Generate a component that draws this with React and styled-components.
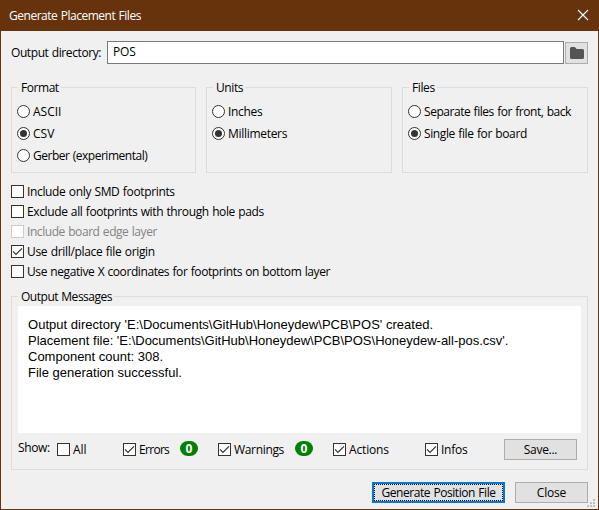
import React from "react";
import styled, { createGlobalStyle } from "styled-components";

const GlobalStyle = createGlobalStyle`
  *, *::before, *::after { box-sizing: border-box; }
  body {
    margin: 0;
    background: #f0f0f0;
    color: #000;
    font: 12px/16px "Open Sans", "Noto Sans", sans-serif;
    word-spacing: 0.6px;
  }
`;

const Window = styled.div`
  width: 599px;
  height: 510px;
  display: flex;
  flex-direction: column;
  background: #f0f0f0;
  border: 1px solid #66330d;
  border-top: 0;
  position: relative;
  white-space: nowrap;
`;

const TitleBar = styled.header`
  height: 31px;
  flex: none;
  display: flex;
  align-items: center;
  justify-content: space-between;
  padding: 0 9px 0 8px;
  background: #66330d;
  color: #fff;
`;

const Text = styled.span`
  letter-spacing: ${(p) => p.$track || 0}px;
`;

const CloseIcon = styled.svg`
  width: 12px;
  height: 12px;
  display: block;
  margin-top: -1px;
`;

const Content = styled.main`
  display: flex;
  flex-direction: column;
  padding: 10px 10px 0;
`;

const DirectoryRow = styled.div`
  display: flex;
  height: 23px;
`;

const DirectoryLabel = styled.label`
  width: 96px;
  padding-top: 4px;
`;

const DirectoryField = styled.div`
  width: 457px;
  height: 23px;
  border: 1px solid #7a7a7a;
  background: #fff;
  padding: 2px 5px;
`;

const BrowseButton = styled.button`
  width: 23px;
  height: 22px;
  margin: 1px 0 0 1px;
  padding: 0;
  display: flex;
  align-items: center;
  justify-content: center;
  border: 1px solid #adadad;
  background: #e1e1e1;
`;

const Groups = styled.div`
  display: flex;
  justify-content: space-between;
  margin-top: 15px;
`;

const Group = styled.section`
  width: ${(p) => p.$width}px;
  height: ${(p) => p.$height}px;
  margin-top: 8px;
  border: 1px solid #dcdcdc;
  display: flex;
  flex-direction: column;
  align-items: flex-start;
`;

const MessageGroup = styled(Group)`
  margin-top: 14px;
`;

const GroupTitle = styled.h2`
  margin: -9px 0 0 6px;
  padding: 0 2px 0 3px;
  height: 18px;
  font: inherit;
  line-height: 18px;
  background: #f0f0f0;
  letter-spacing: ${(p) => p.$track || 0}px;
`;

const Options = styled.div`
  display: flex;
  flex-direction: column;
  padding: 4px 0 0 5px;
`;

const Option = styled.label`
  display: flex;
  align-items: flex-start;
  height: ${(p) => p.$height}px;
  padding-top: ${(p) => p.$pad}px;
  gap: 3px;
  color: ${(p) => (p.$disabled ? "#838383" : "#000")};
`;

const OptionText = styled(Text)`
  line-height: 16px;
  margin-top: -1px;
`;

const Mark = styled.svg`
  width: 13px;
  height: 13px;
  flex: none;
  display: block;
`;

const CheckList = styled.div`
  display: flex;
  flex-direction: column;
  margin-top: 9px;
`;

const Messages = styled.div`
  width: 563px;
  height: 127px;
  margin: 0 0 0 6px;
  padding: 11px 10px;
  background: #fff;
  font: 13px/16px "Liberation Sans", Arial, sans-serif;
  word-spacing: 0;
`;

const Message = styled.div`
  height: 16px;
  letter-spacing: ${(p) => p.$track || 0}px;
`;

const FilterRow = styled.div`
  display: grid;
  grid-template-columns: 39px 66px 57px 38px 77px 38px 92px 79px 73px;
  align-items: center;
  height: 23px;
  margin: 5px 0 0 6px;
`;

const ShowLabel = styled.span`
  margin-top: -3px;
  letter-spacing: -0.35px;
`;

const Badge = styled.span`
  width: 18px;
  height: 15px;
  margin-top: -2px;
  border-radius: 8px / 7.5px;
  background: #008000;
  color: #fff;
  font: 700 12px/15px "Open Sans", sans-serif;
  text-align: center;
`;

const Button = styled.button`
  width: ${(p) => p.$width}px;
  height: 21px;
  padding: 0;
  border: 1px solid #adadad;
  background: #e1e1e1;
  color: #000;
  font: inherit;
  line-height: 17px;
  letter-spacing: ${(p) => p.$track || 0}px;
`;

const DefaultButton = styled(Button)`
  border: 2px solid #0078d7;
  outline: 1px dotted #000;
  outline-offset: -3px;
  line-height: 15px;
  word-spacing: 0.6px;
`;

const Actions = styled.footer`
  display: flex;
  justify-content: flex-end;
  gap: 10px;
  margin-top: 12px;
`;

const Grip = styled.svg`
  position: absolute;
  right: 3px;
  bottom: 2px;
  width: 8px;
  height: 8px;
`;

function Radio({ label, checked, track }) {
  return (
    <Option $height={22} $pad={4}>
      <Mark viewBox="0 0 13 13">
        <circle cx="6.5" cy="6.5" r="6" fill="#fff" stroke="#333" />
        {checked && <circle cx="6.5" cy="6.5" r="3.5" fill="#333" />}
      </Mark>
      <OptionText $track={track}>{label}</OptionText>
    </Option>
  );
}

function Check({ label, checked, disabled, track, height = 20, pad = 3 }) {
  return (
    <Option $height={height} $pad={pad} $disabled={disabled}>
      <Mark viewBox="0 0 13 13">
        <rect x=".5" y=".5" width="12" height="12" fill="#fff" stroke={disabled ? "#ccc" : "#333"} />
        {checked && <path d="M2 6.4L5 9.4L11 3.4" fill="none" stroke="#333" strokeWidth="1.25" />}
      </Mark>
      <OptionText $track={track}>{label}</OptionText>
    </Option>
  );
}

function Filter(props) {
  return <Check height={13} pad={0} {...props} />;
}

export default function App() {
  return (
    <>
      <GlobalStyle />
      <Window>
        <TitleBar>
          <Text $track={-0.47}>Generate Placement Files</Text>
          <CloseIcon viewBox="0 0 12 12">
            <path d="M1 1L11 11M11 1L1 11" stroke="#fff" strokeWidth="1.1" />
          </CloseIcon>
        </TitleBar>
        <Content>
          <DirectoryRow>
            <DirectoryLabel>
              <Text $track={-0.41}>Output directory:</Text>
            </DirectoryLabel>
            <DirectoryField>
              <Text $track={-0.1}>POS</Text>
            </DirectoryField>
            <BrowseButton aria-label="Browse">
              <svg width="14" height="12" viewBox="0 0 14 12">
                <path d="M1.5 0H4.8L6.6 2H12.5Q14 2 14 3.5V10.5Q14 12 12.5 12H1.5Q0 12 0 10.5V1.5Q0 0 1.5 0Z" fill="#545454" />
              </svg>
            </BrowseButton>
          </DirectoryRow>

          <Groups>
            <Group $width={185} $height={86}>
              <GroupTitle $track={-0.45}>Format</GroupTitle>
              <Options>
                <Radio label="ASCII" />
                <Radio label="CSV" checked />
                <Radio label="Gerber (experimental)" track={-0.48} />
              </Options>
            </Group>
            <Group $width={186} $height={86}>
              <GroupTitle $track={-0.4}>Units</GroupTitle>
              <Options>
                <Radio label="Inches" track={-0.3} />
                <Radio label="Millimeters" track={-0.3} checked />
              </Options>
            </Group>
            <Group $width={186} $height={86}>
              <GroupTitle $track={-0.4}>Files</GroupTitle>
              <Options>
                <Radio label="Separate files for front, back" track={-0.45} />
                <Radio label="Single file for board" track={-0.38} checked />
              </Options>
            </Group>
          </Groups>

          <CheckList>
            <Check label="Include only SMD footprints" track={-0.35} />
            <Check label="Exclude all footprints with through hole pads" track={-0.38} />
            <Check label="Include board edge layer" track={-0.43} disabled />
            <Check label="Use drill/place file origin" track={-0.32} checked />
            <Check label="Use negative X coordinates for footprints on bottom layer" track={-0.41} />
          </CheckList>

          <MessageGroup $width={577} $height={174}>
            <GroupTitle $track={-0.48}>Output Messages</GroupTitle>
            <Messages>
              <Message $track={0.02}>Output directory 'E:\Documents\GitHub\Honeydew\PCB\POS' created.</Message>
              <Message>Placement file: 'E:\Documents\GitHub\Honeydew\PCB\POS\Honeydew-all-pos.csv'.</Message>
              <Message>Component count: 308.</Message>
              <Message>File generation successful.</Message>
            </Messages>
            <FilterRow>
              <ShowLabel>Show:</ShowLabel>
              <Filter label="All" />
              <Filter label="Errors" track={-0.7} checked />
              <Badge>0</Badge>
              <Filter label="Warnings" track={-0.33} checked />
              <Badge>0</Badge>
              <Filter label="Actions" track={-0.15} checked />
              <Filter label="Infos" track={-0.25} checked />
              <Button $width={73} $track={-0.3}>Save...</Button>
            </FilterRow>
          </MessageGroup>

          <Actions>
            <DefaultButton $width={133} $track={-0.43}>Generate Position File</DefaultButton>
            <Button $width={73} $track={-0.2}>Close</Button>
          </Actions>
        </Content>
        <Grip viewBox="0 0 8 8" fill="#bfbfbf">
          <path d="M6 0h2v2H6zM3 3h2v2H3zM6 3h2v2H6zM0 6h2v2H0zM3 6h2v2H3zM6 6h2v2H6z" />
        </Grip>
      </Window>
    </>
  );
}
